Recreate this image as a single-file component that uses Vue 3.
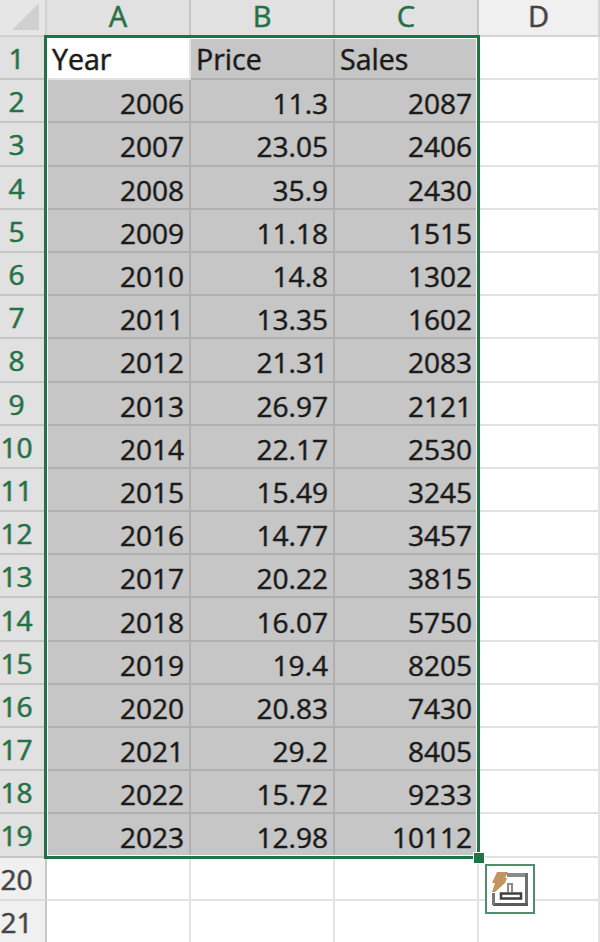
<script setup>
const columns = ['A', 'B', 'C', 'D']
const data = [
  [2006, '11.3', 2087], [2007, '23.05', 2406], [2008, '35.9', 2430], [2009, '11.18', 1515],
  [2010, '14.8', 1302], [2011, '13.35', 1602], [2012, '21.31', 2083], [2013, '26.97', 2121],
  [2014, '22.17', 2530], [2015, '15.49', 3245], [2016, '14.77', 3457], [2017, '20.22', 3815],
  [2018, '16.07', 5750], [2019, '19.4', 8205], [2020, '20.83', 7430], [2021, '29.2', 8405],
  [2022, '15.72', 9233], [2023, '12.98', 10112]
]
</script>

<template>
  <div class="sheet">
    <div class="corner"><span class="tri"></span></div>
    <div v-for="(c, i) in columns" :key="c" class="colhead" :class="{ sel: i < 3 }">{{ c }}</div>

    <div class="rowhead sel">1</div>
    <div class="cell txt first">Year</div>
    <div class="cell txt shade">Price</div>
    <div class="cell txt shade">Sales</div>
    <div class="cell"></div>

    <template v-for="(r, i) in data" :key="r[0]">
      <div class="rowhead sel">{{ i + 2 }}</div>
      <div class="cell num shade">{{ r[0] }}</div>
      <div class="cell num shade">{{ r[1] }}</div>
      <div class="cell num shade">{{ r[2] }}</div>
      <div class="cell"></div>
    </template>

    <template v-for="n in [20, 21]" :key="n">
      <div class="rowhead">{{ n }}</div>
      <div class="cell"></div>
      <div class="cell"></div>
      <div class="cell"></div>
      <div class="cell"></div>
    </template>

    <div class="selection"></div>
    <div class="handle"></div>
    <div class="quick">
      <svg width="46" height="46" viewBox="487 866 46 46" fill="none">
        <path d="M507 875h20" stroke="#8a8a8a" stroke-width="4" />
        <path d="M526.500 873v33" stroke="#6f6f6f" stroke-width="3" />
        <path d="M493 904.500h35" stroke="#5a5a5a" stroke-width="3" />
        <path d="M493.500 893v12" stroke="#777" stroke-width="3" />
        <path d="M501 893.500h20v5h-20z" stroke="#3f3f3f" stroke-width="2.500" fill="#fff" />
        <path d="M508 892v-8h4v8" stroke="#8a8a8a" stroke-width="2" />
        <path d="M497 872h11l-3 6h2l-2 5-10 9h-3l3-9h-3z" fill="#c2945f" />
      </svg>
    </div>
  </div>
</template>

<style scoped>
.sheet {
  position: relative;
  width: 600px;
  height: 942px;
  overflow: hidden;
  display: grid;
  grid-template-columns: 47px 144px 144px 144px 121px;
  grid-template-rows: 37px repeat(21, 43.2px);
  background: #fff;
  font-family: "Open Sans", "Noto Sans", sans-serif;
  font-size: 28px;
  line-height: 1;
  color: #262626;
}
.colhead,
.rowhead,
.cell {
  -webkit-text-stroke: 0.3px currentColor;
  text-shadow: -0.7px 0 rgba(200, 130, 50, 0.4), 0.7px 0 rgba(50, 120, 200, 0.4);
}
.corner {
  background: #e6e6e6;
  border-right: 2px solid #d2d2d2;
  border-bottom: 2px solid #cfcfcf;
  box-sizing: border-box;
  position: relative;
}
.tri {
  position: absolute;
  right: 6px;
  bottom: 5px;
  width: 0;
  height: 0;
  border-style: solid;
  border-width: 0 0 27px 27px;
  border-color: transparent transparent #d0d0d0 transparent;
}
.colhead {
  box-sizing: border-box;
  background: #f0f0f0;
  border-right: 2px solid #d4d4d4;
  border-bottom: 2px solid #d4d4d4;
  display: flex;
  align-items: center;
  justify-content: center;
  font-size: 29px;
  color: #444;
  padding-bottom: 4px;
}
.colhead.sel {
  background: #e1e1e1;
  color: #217346;
  border-right-color: #c4c4c4;
  border-bottom-color: #9fb5a7;
}
.rowhead {
  box-sizing: border-box;
  background: #f0f0f0;
  border-right: 2px solid #c8c8c8;
  border-bottom: 2px solid #dcdcdc;
  display: flex;
  align-items: center;
  justify-content: center;
  font-size: 28px;
  color: #444;
  padding-right: 12px;
  padding-top: 1px;
}
.rowhead.sel {
  background: #e1e1e1;
  color: #217346;
  border-bottom-color: #c6c6c6;
}
.cell {
  box-sizing: border-box;
  border-right: 2px solid #e2e2e2;
  border-bottom: 2px solid #e2e2e2;
  display: flex;
  align-items: center;
  color: #1a1a1a;
  min-width: 0;
  white-space: nowrap;
  padding-top: 5px;
}
.txt {
  padding-left: 5px;
  padding-top: 3px;
  font-size: 28.500px;
}
.num {
  justify-content: flex-end;
  padding-right: 5px;
}
.shade {
  background: #c6c6c6;
  border-right-color: #b0b0b0;
  border-bottom-color: #b0b0b0;
}
.first {
  background: #fff;
}
.selection {
  position: absolute;
  left: 44px;
  top: 35px;
  width: 436px;
  height: 824px;
  box-sizing: border-box;
  border: 3px solid #217346;
  box-shadow: inset 0 0 0 1px #fff;
}
.handle {
  position: absolute;
  left: 473px;
  top: 852px;
  width: 10px;
  height: 10px;
  background: #217346;
  border: 1px solid #fff;
}
.quick {
  position: absolute;
  left: 485px;
  top: 864px;
  width: 50px;
  height: 50px;
  box-sizing: border-box;
  border: 2px solid #4f8f6c;
  background: #fff;
  display: flex;
}
</style>
